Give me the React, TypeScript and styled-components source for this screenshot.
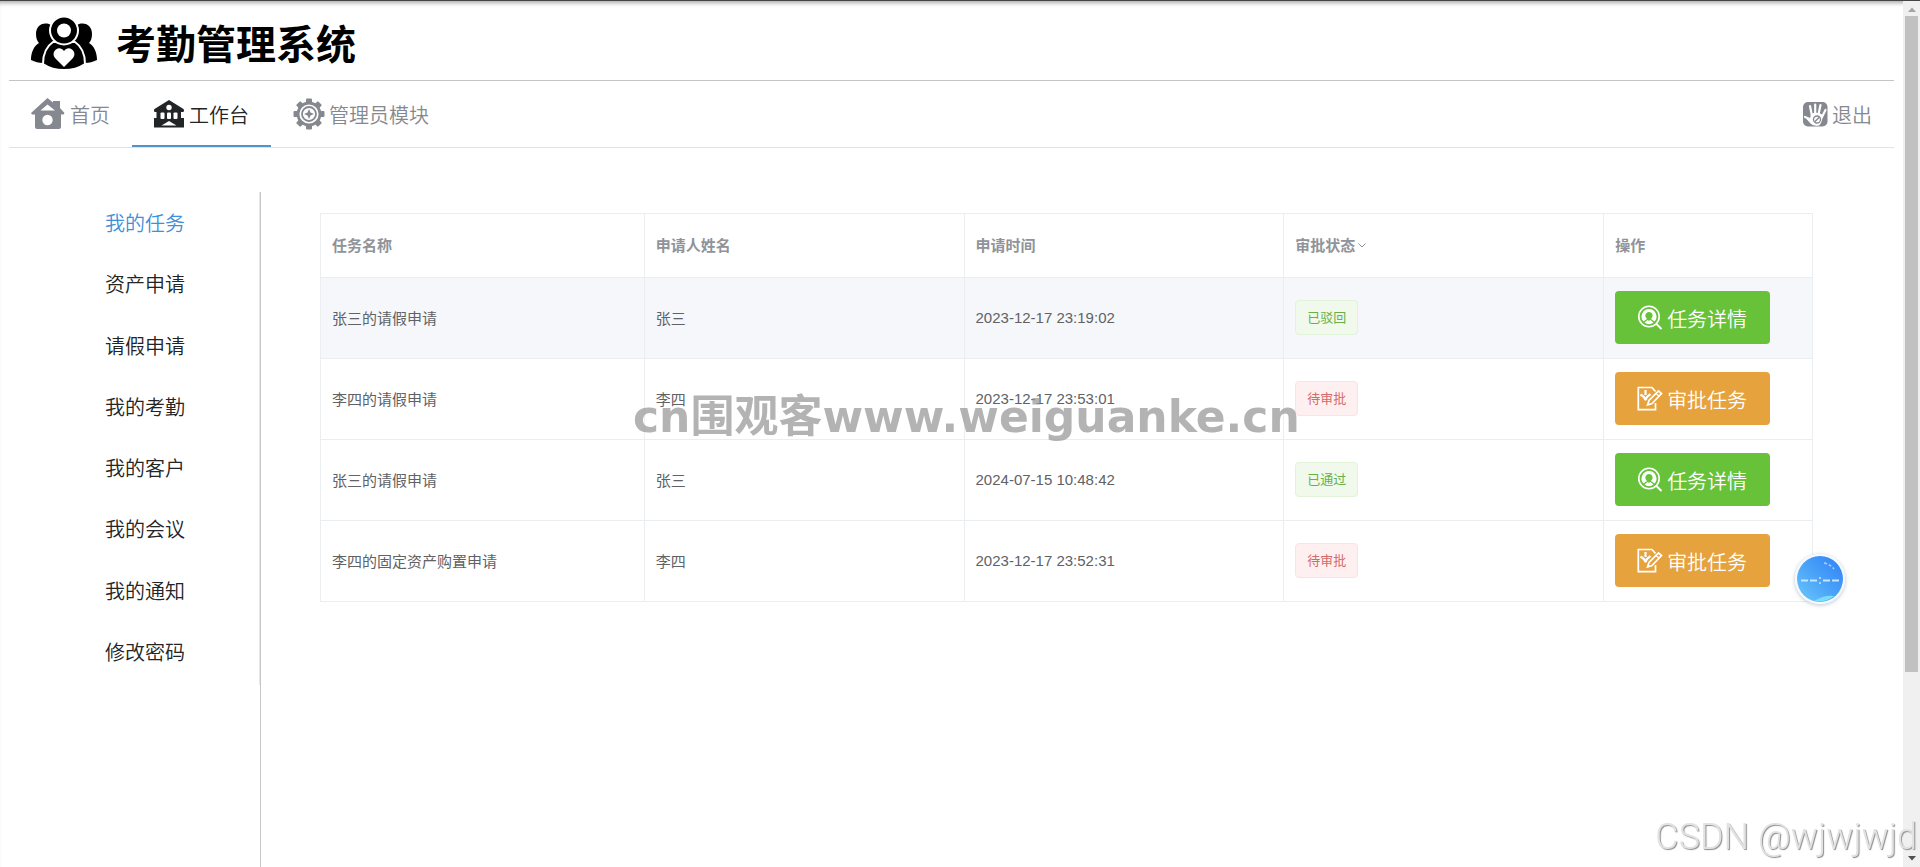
import React from 'react';
import styled, { createGlobalStyle } from 'styled-components';

const GlobalStyle = createGlobalStyle`
  *, *::before, *::after { box-sizing: border-box; }
  body {
    margin: 0;
    background: #fff;
    color: #222426;
    font-family: "Liberation Sans", "Noto Sans CJK SC", sans-serif;
    font-size: 20px;
    font-weight: 350;
  }
  a { color: inherit; text-decoration: none; }
  button { font: inherit; border: 0; cursor: pointer; }
  svg { display: block; flex: none; }
`;

const Shell = styled.div`
  display: flex;
  min-height: 100vh;
  border-top: 1px solid #474448;
  box-shadow: inset 0 5px 4px -3px #aaa;
`;

const Page = styled.div`
  flex: 1;
  min-width: 0;
  display: flex;
  flex-direction: column;
  padding: 0 9px;
`;

const Header = styled.header`
  display: flex;
  align-items: center;
  gap: 19px;
  height: 80px;
  padding: 6px 22px 0;
  border-bottom: 1px solid #c4c4c4;
`;

const Title = styled.h1`
  margin: 0;
  padding-top: 2px;
  font-size: 40px;
  line-height: 48px;
  font-weight: 700;
  color: #000;
`;

const Nav = styled.nav`
  display: flex;
  height: 67px;
  border-bottom: 1px solid #e2e2e4;
`;

const NavItem = styled.a<{ $active?: boolean; $end?: boolean }>`
  display: flex;
  align-items: center;
  gap: ${(p) => (p.$end ? 4 : 3)}px;
  padding: 2px 22px 0;
  margin-left: ${(p) => (p.$end ? 'auto' : '0')};
  color: ${(p) => (p.$active ? '#222426' : '#85888e')};
  border-bottom: 2px solid ${(p) => (p.$active ? '#5294ca' : 'transparent')};
`;

const Content = styled.div`
  flex: 1;
  display: flex;
  margin-top: 44px;
`;

const Aside = styled.aside`
  flex: none;
  width: 252px;
  border-right: 1px solid #c8c8c8;
`;

const Menu = styled.ul`
  display: flex;
  flex-direction: column;
  height: 493px;
  margin: 0;
  padding: 0 0 3px;
  list-style: none;
  border-right: 1px solid #e6e6e6;
`;

const MenuItem = styled.li`
  flex: 1;
  display: flex;
`;

const MenuLink = styled.a<{ $active: boolean }>`
  flex: 1;
  display: flex;
  align-items: center;
  padding-left: 96px;
  color: ${(p) => (p.$active ? '#3f90d8' : '#222426')};
`;

const Main = styled.main`
  flex: 1;
  min-width: 0;
  padding: 21px 81px 40px 59px;
`;

const TaskTable = styled.table`
  width: 100%;
  table-layout: fixed;
  border-collapse: collapse;
  font-size: 15px;
  font-weight: 400;
  color: #606266;
`;

const Col = styled.col<{ $width?: string }>`
  width: ${(p) => p.$width ?? 'auto'};
`;

const HeadCell = styled.th`
  height: 64px;
  padding: 0 11px 2px;
  border: 1px solid #ebeef0;
  text-align: left;
  font-weight: 700;
  color: #909399;
`;

const Row = styled.tr<{ $hover: boolean }>`
  height: 81px;
  background: ${(p) => (p.$hover ? '#f5f7fa' : '#fff')};
`;

const Cell = styled.td`
  padding: 0 11px 2px;
  border: 1px solid #ebeef0;
`;

const FilterButton = styled.button`
  display: inline-flex;
  align-items: center;
  gap: 2px;
  padding: 0;
  background: none;
  color: inherit;
`;

type Tone = 'success' | 'danger';

const Tag = styled.span<{ $tone: Tone }>`
  display: inline-flex;
  align-items: center;
  height: 35px;
  padding: 0 11px 1px;
  border: 1px solid ${(p) => (p.$tone === 'success' ? '#e1f3d8' : '#fde2e2')};
  border-radius: 4px;
  background: ${(p) => (p.$tone === 'success' ? '#f0f9eb' : '#fef0f0')};
  color: ${(p) => (p.$tone === 'success' ? '#67b04a' : '#d56a6a')};
  font-size: 13px;
`;

const ActionButton = styled.button<{ $kind: 'detail' | 'approve' }>`
  display: flex;
  align-items: center;
  gap: 4px;
  height: 53px;
  padding: 2px 23px 0 22px;
  border-radius: 4px;
  background: ${(p) => (p.$kind === 'detail' ? '#67c23a' : '#e6a23c')};
  color: #fff;
  font-size: 20px;
  font-weight: 350;
  white-space: nowrap;
`;

const ScrollTrack = styled.div`
  position: sticky;
  top: 0;
  flex: none;
  display: flex;
  flex-direction: column;
  align-items: center;
  justify-content: space-between;
  gap: 4px;
  width: 17px;
  height: calc(100vh - 1px);
  padding: 6px 0;
  background: #f0f0f0;
`;

const ScrollRail = styled.div`
  flex: 1;
  width: 13px;
`;

const ScrollThumb = styled.div`
  height: 78.5%;
  background: #c1c1c1;
`;

const Watermark = styled.div`
  position: fixed;
  left: 50%;
  top: 390px;
  margin-left: -327px;
  font-family: "DejaVu Sans", "Noto Sans CJK SC", sans-serif;
  font-size: 44px;
  line-height: 54px;
  font-weight: 700;
  color: rgba(150, 150, 150, 0.72);
  white-space: nowrap;
  pointer-events: none;
`;

const Signature = styled.div`
  position: fixed;
  right: 3px;
  bottom: 6px;
  font-family: Roboto, sans-serif;
  font-size: 36px;
  line-height: 48px;
  font-weight: 300;
  color: #e2e2e2;
  text-shadow: 1px 1px 1px #8c8c8c;
  pointer-events: none;
`;

const FloatBall = styled.button`
  position: fixed;
  right: 75px;
  top: 554px;
  width: 50px;
  height: 50px;
  padding: 0;
  border: 2px solid #f4faff;
  border-radius: 50%;
  background: none;
  box-shadow: 0 1px 4px #b8c4cc;
`;

const Logo = () => (
  <svg width="66" height="54" viewBox="0 0 66 54" aria-hidden="true">
    <g>
      <path d="M18 7C10 5 5 10 5 17c0 4 1 7 3 9C3 29 0 35 0 43c4 2 8 3 12 3 1-8 5-14 12-17V22C19 18 18 12 20 8Z" />
      <path d="M48 7C56 5 61 10 61 17c0 4-1 7-3 9 5 3 8 9 8 17-4 2-8 3-12 3-1-8-5-14-12-17V22c5-4 6-10 4-14Z" />
      <path d="M22 25C16 29 12 37 12 47c6 4 13 6 21 6s15-2 21-6c0-10-4-18-10-22Z" stroke="#fff" strokeWidth="2" />
      <circle cx="33" cy="13.500" r="14" stroke="#fff" strokeWidth="2" />
    </g>
    <circle cx="33" cy="13.500" r="7" fill="#fff" />
    <path d="M33 50 24 41c-5-6 4-14 9-7 5-7 14 1 9 7Z" fill="#fff" />
  </svg>
);

const HouseIcon = () => (
  <svg width="36" height="32" viewBox="0 0 36 32" aria-hidden="true">
    <path fill="currentColor" d="M16.500 0 22 4.500V3h7v7l4.500 5-1 1.500H30V29q0 2-2 2H6q-2 0-2-2V16.500H1L0 15Z" />
    <path fill="#fff" d="M9.500 12.500 16.500 6.500l7.500 6Z" />
    <circle cx="16.500" cy="22" r="5.200" fill="#fff" />
  </svg>
);

const WorkbenchIcon = () => (
  <svg width="32" height="30" viewBox="1 0 32 30" aria-hidden="true">
    <path fill="currentColor" d="m16 1 14.500 9q1.500 3-1 3H28v6h3v9.500H.5V19h3v-6H2.500q-3 0-1-3Z" />
    <g fill="#fff">
      <circle cx="16" cy="8.500" r="2.700" />
      <rect x="7.500" y="13.500" width="4" height="6.500" rx="1" />
      <rect x="14" y="13.500" width="4" height="6.500" rx="1" />
      <rect x="20.500" y="13.500" width="4" height="6.500" rx="1" />
      <path d="m8.500 26.500 7.500-4.500 7.500 4.500Z" />
    </g>
  </svg>
);

const GearIcon = () => (
  <svg width="33" height="32" viewBox="-16 -16 33 32" aria-hidden="true">
    <g fill="currentColor">
      {[0, 45, 90, 135, 180, 225, 270, 315].map((a) => (
        <rect key={a} x="-3" y="-15.500" width="6" height="5" rx="1" transform={`rotate(${a})`} />
      ))}
      <path d="M0-5 1.500-1.500 5 0 1.500 1.500 0 5-1.500 1.500-5 0-1.500-1.500Z" />
    </g>
    <circle r="11" fill="none" stroke="currentColor" strokeWidth="2.800" />
    <circle r="7" fill="none" stroke="currentColor" strokeWidth="1.800" />
  </svg>
);

const ExitIcon = () => (
  <svg width="25" height="25" viewBox="0 0 25 25" aria-hidden="true">
    <rect width="24.500" height="24.500" rx="5" fill="currentColor" />
    <path d="m9 14-2-10M12.200 12V2.500M15.500 12.500 17.500 3M19 15l3.500-7M9 18l-7-3" stroke="#fff" strokeWidth="2.200" strokeLinecap="round" />
    <path fill="#fff" d="M8 12q6-3 12 1-1 8-4 10.500-5 1-8-1.500l-5-5.500 4 0Z" />
    <circle cx="14" cy="17.500" r="3.500" fill="none" stroke="currentColor" strokeWidth="1.300" />
    <path d="m11.700 19.800 4.600-4.600" stroke="currentColor" strokeWidth="1.300" />
  </svg>
);

const DetailIcon = () => (
  <svg width="26" height="26" viewBox="0 0 26 26" fill="none" stroke="currentColor" aria-hidden="true">
    <circle cx="12" cy="11.500" r="10.200" strokeWidth="1.600" />
    <path d="m19.500 19 5 5" strokeWidth="2" />
    <path
      fill="currentColor"
      stroke="none"
      fillRule="evenodd"
      d="M12 4a7.500 7.500 0 0 1 5.500 12.500L15.500 15l-1.500-1c3-3 1.500-7-2-7s-5 4-2 7l-1.500 1-2 1.500A7.500 7.500 0 0 1 12 4Z"
    />
    <path d="M7.500 17.500 10.500 15q1.500 1.500 3 0l3 2.500q-4.500 3.500-9 0Z" fill="currentColor" stroke="none" />
  </svg>
);

const ApproveIcon = () => (
  <svg width="26" height="26" viewBox="0 0 26 26" fill="none" stroke="currentColor" strokeWidth="1.700" aria-hidden="true">
    <path d="M18.500 17v6.700H1.300V1.500H15l3.500 4" />
    <path d="M3.500 8.500 7 11l1.500 3M13.500 8 10 11l-1.500 3M8.500 4v5" strokeWidth="2.200" />
    <path d="m10.500 19 1.500-4.500L21.500 5l3 2.500-9.500 10Z" />
    <path d="m19 7.500 3 2.500" strokeWidth="1.200" />
  </svg>
);

const BallFace = () => (
  <svg width="46" height="46" viewBox="0 0 46 46" aria-hidden="true">
    <defs>
      <linearGradient id="ball" x1="0" y1="1" x2="1" y2="0">
        <stop offset="0" stopColor="#6cc8fb" />
        <stop offset="0.500" stopColor="#4aa2f8" />
        <stop offset="1" stopColor="#2f7ff6" />
      </linearGradient>
    </defs>
    <circle cx="23" cy="23" r="23" fill="url(#ball)" />
    <path d="M17 45q10-6 20-5-8 7-20 5Z" fill="#7adcff" />
    <path d="M27 7q6 1 10 6" fill="none" stroke="#a9d6ff" strokeWidth="1.300" strokeDasharray="3 2" />
    <path d="M4 24.500h7M13 24.500h7M26 24.500h7M35 24.500h7" stroke="#c4e6ff" strokeWidth="2" />
    <path d="M22 22h2M22 27h2" stroke="#c4e6ff" strokeWidth="1.600" />
  </svg>
);

const menu = ['我的任务', '资产申请', '请假申请', '我的考勤', '我的客户', '我的会议', '我的通知', '修改密码'];

interface Task {
  name: string;
  applicant: string;
  time: string;
  status: string;
  done: boolean;
}

const tasks: Task[] = [
  { name: '张三的请假申请', applicant: '张三', time: '2023-12-17 23:19:02', status: '已驳回', done: true },
  { name: '李四的请假申请', applicant: '李四', time: '2023-12-17 23:53:01', status: '待审批', done: false },
  { name: '张三的请假申请', applicant: '张三', time: '2024-07-15 10:48:42', status: '已通过', done: true },
  { name: '李四的固定资产购置申请', applicant: '李四', time: '2023-12-17 23:52:31', status: '待审批', done: false },
];

export default function App() {
  return (
    <>
      <GlobalStyle />
      <Shell>
        <Page>
          <Header>
            <Logo />
            <Title>考勤管理系统</Title>
          </Header>
          <Nav>
            <NavItem href="#home"><HouseIcon />首页</NavItem>
            <NavItem href="#workbench" $active><WorkbenchIcon />工作台</NavItem>
            <NavItem href="#admin"><GearIcon />管理员模块</NavItem>
            <NavItem href="#logout" $end><ExitIcon />退出</NavItem>
          </Nav>
          <Content>
            <Aside>
              <Menu>
                {menu.map((label, i) => (
                  <MenuItem key={label}>
                    <MenuLink href={`#menu-${i}`} $active={i === 0}>{label}</MenuLink>
                  </MenuItem>
                ))}
              </Menu>
            </Aside>
            <Main>
              <TaskTable>
                <colgroup>
                  <Col $width="21.7%" />
                  <Col />
                  <Col />
                  <Col />
                  <Col $width="14%" />
                </colgroup>
                <thead>
                  <tr>
                    <HeadCell>任务名称</HeadCell>
                    <HeadCell>申请人姓名</HeadCell>
                    <HeadCell>申请时间</HeadCell>
                    <HeadCell>
                      <FilterButton type="button">
                        审批状态
                        <svg width="10" height="8" viewBox="0 0 10 8" fill="none" stroke="currentColor" aria-hidden="true">
                          <path d="m1.500 2.500 3.500 3.500 3.500-3.500" />
                        </svg>
                      </FilterButton>
                    </HeadCell>
                    <HeadCell>操作</HeadCell>
                  </tr>
                </thead>
                <tbody>
                  {tasks.map((t, i) => (
                    <Row key={t.time} $hover={i === 0}>
                      <Cell>{t.name}</Cell>
                      <Cell>{t.applicant}</Cell>
                      <Cell>{t.time}</Cell>
                      <Cell><Tag $tone={t.done ? 'success' : 'danger'}>{t.status}</Tag></Cell>
                      <Cell>
                        <ActionButton type="button" $kind={t.done ? 'detail' : 'approve'}>
                          {t.done ? <DetailIcon /> : <ApproveIcon />}
                          {t.done ? '任务详情' : '审批任务'}
                        </ActionButton>
                      </Cell>
                    </Row>
                  ))}
                </tbody>
              </TaskTable>
            </Main>
          </Content>
        </Page>
        <ScrollTrack aria-hidden="true">
          <svg width="8" height="5" viewBox="0 0 8 5"><path d="m0 5 4-4.500L8 5Z" fill="#a3a3a3" /></svg>
          <ScrollRail><ScrollThumb /></ScrollRail>
          <svg width="8" height="5" viewBox="0 0 8 5"><path d="m0 0 4 4.500L8 0Z" fill="#505050" /></svg>
        </ScrollTrack>
      </Shell>
      <FloatBall type="button" aria-label="悬浮球"><BallFace /></FloatBall>
      <Watermark>cn围观客www.weiguanke.cn</Watermark>
      <Signature>CSDN @wjwjwjd</Signature>
    </>
  );
}
